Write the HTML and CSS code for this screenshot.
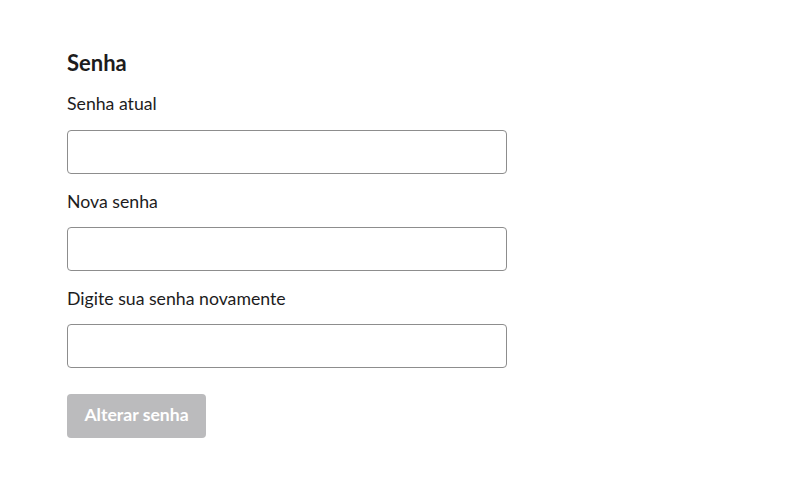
FILE: index.html
```html
<!DOCTYPE html>
<html lang="pt-BR">
<head>
<meta charset="utf-8">
<link rel="stylesheet" href="styles.css">
</head>
<body>
<main class="page">
  <form class="form">
    <h2 class="title">Senha</h2>
    <div class="field">
      <label class="label" for="a">Senha atual</label>
      <input class="input" id="a" type="password">
    </div>
    <div class="field">
      <label class="label" for="b">Nova senha</label>
      <input class="input" id="b" type="password">
    </div>
    <div class="field">
      <label class="label" for="c">Digite sua senha novamente</label>
      <input class="input" id="c" type="password">
    </div>
    <button class="button" type="button" disabled>Alterar senha</button>
  </form>
</main>
</body>
</html>
```
FILE: styles.css
```css
html, body {
  margin: 0;
  padding: 0;
  background: #ffffff;
}
body {
  font-family: Lato, "Noto Sans", sans-serif;
  color: #1d1c1d;
}
.page {
  padding: 51px 0 0 67px;
}
.form {
  display: flex;
  flex-direction: column;
  width: 440px;
}
.title {
  margin: 0 0 17px;
  font-size: 22px;
  line-height: 24px;
  font-weight: 700;
}
.field {
  display: flex;
  flex-direction: column;
  margin-bottom: 16px;
}
.label {
  font-size: 17.7px;
  line-height: 24px;
  margin-bottom: 14px;
}
.field + .field .label {
  margin-bottom: 13px;
}
.input {
  box-sizing: border-box;
  height: 44px;
  width: 440px;
  margin: 0;
  border: 1px solid #8d8d8d;
  border-radius: 4px;
  background: #fff;
  font: inherit;
  padding: 0 12px;
}
.button {
  align-self: flex-start;
  margin-top: 10px;
  box-sizing: border-box;
  height: 44px;
  width: 139px;
  border: none;
  border-radius: 4px;
  background: #bbbbbd;
  color: #ffffff;
  font-family: Lato, "Noto Sans", sans-serif;
  font-size: 17.6px;
  font-weight: 700;
  padding: 0 0 3px;
}
```
